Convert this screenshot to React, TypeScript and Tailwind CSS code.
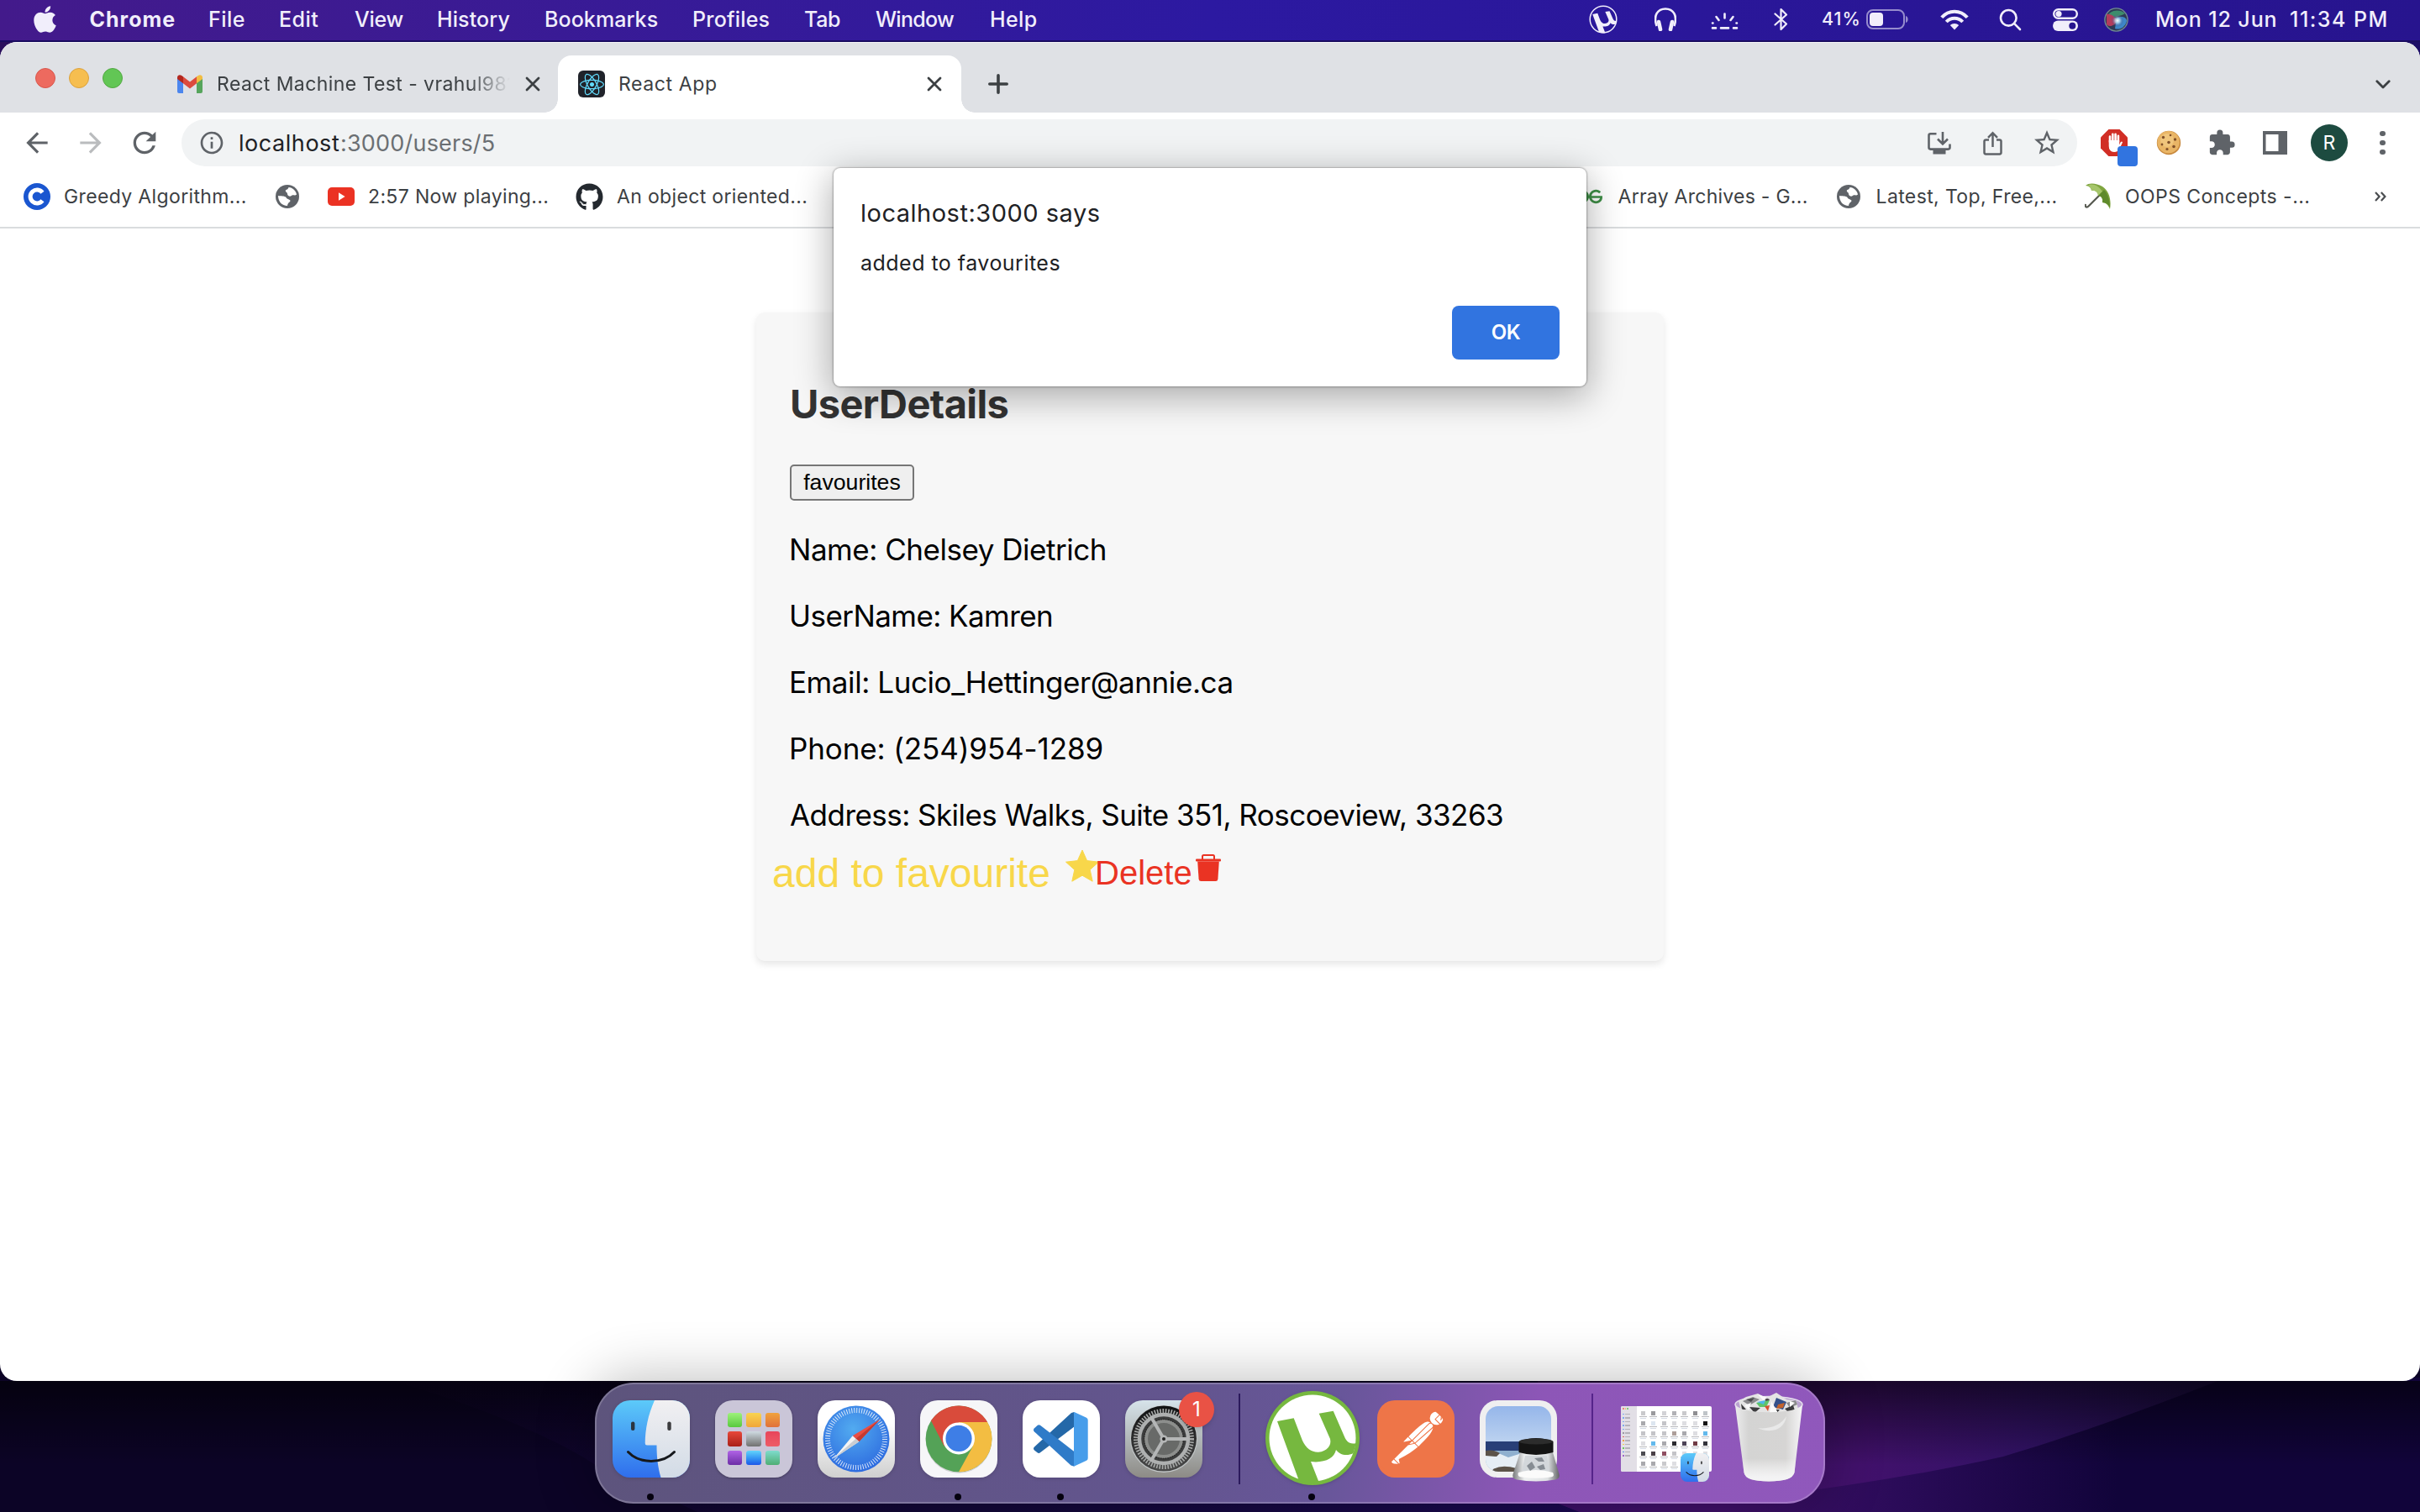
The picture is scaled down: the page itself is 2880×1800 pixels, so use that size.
import type { ReactNode } from "react";
import { FaApple, FaGithub, FaReact } from "react-icons/fa";
import { MdArrowBack, MdArrowForward, MdRefresh, MdInfoOutline, MdStarBorder, MdExtension } from "react-icons/md";
import { SiGeeksforgeeks, SiPostman } from "react-icons/si";

function Wallpaper() {
  return (
    <svg className="absolute inset-0" width="2880" height="1800" viewBox="0 0 2880 1800">
      <defs>
        <linearGradient id="wpTop" x1="0" x2="1" y1="0" y2="0">
          <stop offset="0" stopColor="#2a0f5c" />
          <stop offset="1" stopColor="#1b0c66" />
        </linearGradient>
        <linearGradient id="wpMid" x1="0" x2="1" y1="0" y2="0">
          <stop offset="0" stopColor="#0e0428" />
          <stop offset="0.6" stopColor="#14083c" />
          <stop offset="1" stopColor="#1b0a52" />
        </linearGradient>
        <linearGradient id="wpGlow" gradientUnits="userSpaceOnUse" x1="1850" y1="0" x2="2650" y2="0">
          <stop offset="0" stopColor="#3c1068" />
          <stop offset="0.45" stopColor="#42116c" />
          <stop offset="0.7" stopColor="#321266" />
          <stop offset="1" stopColor="#1d0d48" />
        </linearGradient>
        <linearGradient id="wpLow" gradientUnits="userSpaceOnUse" x1="2050" y1="0" x2="2520" y2="0">
          <stop offset="0" stopColor="#40106a" />
          <stop offset="0.45" stopColor="#2a0b58" />
          <stop offset="1" stopColor="#11043a" />
        </linearGradient>
        <linearGradient id="wpShade" x1="0" x2="0" y1="0" y2="1">
          <stop offset="0" stopColor="#000" stopOpacity="0.6" />
          <stop offset="1" stopColor="#000" stopOpacity="0" />
        </linearGradient>
      </defs>
      <rect width="2880" height="900" fill="url(#wpTop)" />
      <rect y="900" width="2880" height="900" fill="#0c0426" />
      <path d="M455 1640 C560 1670 660 1710 715 1748 C760 1770 800 1785 830 1800 H1900 V1640Z" fill="url(#wpMid)" />
      <path d="M1830 1640 V1780 L1880 1800 H2880 V1640Z" fill="url(#wpLow)" />
      <path d="M1830 1640 V1780 L1880 1800 C2060 1790 2230 1768 2384 1734 C2480 1705 2560 1675 2650 1640Z" fill="url(#wpGlow)" />
      <rect y="1644" width="2880" height="100" fill="url(#wpShade)" />
    </svg>
  );
}

const muPath =
  "M14 36 L33.7 32.3 L44 59 C48 68 55 73 63 72.7 C73 72 79 65 77 57 L63.7 26.7 L80.7 23.7 L93 52 C96 60 100 64 108 62 L104.5 74 C97 78 88 76 84 70 C82 80 70 86 54 84 L64 109.5 C56 111 47 110 40 107Z";

function MenuText({ children, className }: { children: string; className: string }) {
  return <span className={`shrink-0 whitespace-pre ${className}`}>{children}</span>;
}

function MenuBar() {
  return (
    <div className="relative flex h-[50px] items-center border-b-2 border-[#1a0c60] bg-linear-to-r from-[#431a8b] via-[#2c19a1] to-[#27148e] pb-[2px] pl-10 text-[25px] leading-none font-medium text-[#f1eefb]">
      <FaApple className="mr-[39.5px] h-9 w-[27px] shrink-0" />
      <MenuText className="w-[141.5px] font-bold tracking-[1px]">Chrome</MenuText>
      <MenuText className="w-[84px] tracking-[0.5px]">File</MenuText>
      <MenuText className="w-[90px] tracking-[0.5px]">Edit</MenuText>
      <MenuText className="w-[98px] tracking-[-0.3px]">View</MenuText>
      <MenuText className="w-[128px] tracking-[0.1px]">History</MenuText>
      <MenuText className="w-[176px] tracking-[0.08px]">Bookmarks</MenuText>
      <MenuText className="w-[133px] tracking-[0.2px]">Profiles</MenuText>
      <MenuText className="w-[85px] tracking-[-0.3px]">Tab</MenuText>
      <MenuText className="w-[136px] tracking-[-0.7px]">Window</MenuText>
      <MenuText className="w-[60px] tracking-[0.4px]">Help</MenuText>

      <svg className="ml-[653px] size-[34px] shrink-0" viewBox="0 0 112 112">
        <circle cx="56" cy="56" r="52" fill="none" stroke="currentColor" strokeWidth="5" />
        <path d={muPath} fill="currentColor" />
      </svg>
      <svg className="ml-11 h-[28px] w-[26px] shrink-0" viewBox="0 0 26 28" fill="none" stroke="currentColor">
        <path d="M2.6 22 C-2 9 4 1.5 13 1.5 C22 1.5 28 9 23.4 22" strokeWidth="2.6" />
        <path d="M5 17 L7 26 M21 17 L19 26" strokeWidth="4.6" strokeLinecap="round" />
      </svg>
      <svg className="mt-[3px] ml-[41px] h-[20px] w-[33px] shrink-0" viewBox="0 0 33 20" stroke="currentColor" strokeWidth="2.6" strokeLinecap="round">
        <path d="M16.5 1.5 V6.5 M6.5 5 L9.5 9 M26.5 5 L23.5 9 M2 12.5 H2.5 M30.5 12.5 H31 M2 18.4 H6 M12 18.4 H21 M27 18.4 H31" />
      </svg>
      <svg className="ml-[42px] h-[28px] w-[17px] shrink-0" viewBox="0 0 17 28" fill="none" stroke="currentColor" strokeWidth="2.2" strokeLinejoin="round" strokeLinecap="round">
        <path d="M1.5 7.5 L15 19.5 L8.5 26 V2 L15 8.5 L1.5 20.5" />
      </svg>
      <MenuText className="ml-[40px] w-[53px] text-[21.5px] tracking-[1px]">41%</MenuText>
      <svg className="h-[24px] w-[50px] shrink-0" viewBox="0 0 50 24">
        <rect x="1" y="1" width="44" height="22" rx="7" fill="none" stroke="currentColor" strokeOpacity="0.55" strokeWidth="2" />
        <rect x="4" y="4" width="16" height="16" rx="4" fill="currentColor" />
        <path d="M47 8 C50.5 9 50.5 15 47 16Z" fill="currentColor" fillOpacity="0.55" />
      </svg>
      <svg className="ml-[38px] h-[25px] w-[34px] shrink-0" viewBox="0 0 34 25" fill="none" stroke="currentColor" strokeWidth="4">
        <path d="M1.8 9.8 C10 0.3 24 0.3 32.2 9.8" />
        <path d="M7.3 15 C12.5 9.2 21.5 9.2 26.7 15" />
        <path d="M17 24.5 L11.8 19 C14.5 16.2 19.5 16.2 22.2 19Z" fill="currentColor" stroke="none" />
      </svg>
      <svg className="ml-9 size-[27px] shrink-0" viewBox="0 0 27 27" fill="none" stroke="currentColor" strokeWidth="2.6" strokeLinecap="round">
        <circle cx="11.3" cy="11.3" r="9.3" />
        <path d="M18.2 18.2 L25 25" />
      </svg>
      <svg className="ml-[37px] h-[27px] w-[30px] shrink-0" viewBox="0 0 30 27">
        <rect x="1.2" y="1.2" width="27.6" height="10.6" rx="5.3" fill="none" stroke="currentColor" strokeWidth="2.4" />
        <circle cx="7" cy="6.5" r="3.6" fill="currentColor" />
        <rect y="14.5" width="30" height="12.5" rx="6.2" fill="currentColor" />
        <circle cx="23.3" cy="20.7" r="4" fill="#27158f" />
      </svg>
      <svg className="ml-[31px] size-[29px] shrink-0" viewBox="0 0 29 29">
        <defs>
          <radialGradient id="siri">
            <stop offset="0" stopColor="#fff" />
            <stop offset="0.4" stopColor="#b5dcee" stopOpacity="0.75" />
            <stop offset="1" stopColor="#2d2c70" stopOpacity="0" />
          </radialGradient>
        </defs>
        <circle cx="14.5" cy="14.5" r="13.6" fill="#2e3a55" stroke="#6f8a92" strokeWidth="1.4" />
        <path d="M3 12 C6 3 18 1 25 7 C20 11 10 11 3 12Z" fill="#3d8c6c" />
        <path d="M3 8 C9 7 13 12 16 15 C13 22 6 24 3 20Z" fill="#b23c5c" />
        <path d="M15 13 C21 9 27 12 27 16 C25 24 18 27 13 25Z" fill="#3d86c8" />
        <circle cx="16" cy="15.5" r="7.5" fill="url(#siri)" />
      </svg>
      <MenuText className="ml-[32px] w-[160px] tracking-[0.9px]">Mon 12 Jun</MenuText>
      <MenuText className="tracking-[1.5px]">11:34 PM</MenuText>
    </div>
  );
}

function CloseX() {
  return (
    <svg className="size-[18px] shrink-0" viewBox="0 0 18 18" stroke="#3c4043" strokeWidth="2.8" strokeLinecap="round">
      <path d="M2 2 L16 16 M16 2 L2 16" />
    </svg>
  );
}

function TabStrip() {
  return (
    <div className="flex h-[84px] items-center border-t border-white/70 bg-[#dfe1e5] pt-[15px] pl-[42px] text-[23px] leading-none text-[#3c4043]">
      <div className="-mt-[14px] flex gap-4">
        <span className="size-6 rounded-full border border-[#d8564c] bg-[#ed6a5f]" />
        <span className="size-6 rounded-full border border-[#dba13d] bg-[#f6be50]" />
        <span className="size-6 rounded-full border border-[#52a842] bg-[#62c655]" />
      </div>
      <svg className="ml-[65px] h-[22px] w-[30px] shrink-0" viewBox="0 0 30 22">
        <path d="M0 3 V20 Q0 22 2 22 H7 V9Z" fill="#4c86ee" />
        <path d="M30 3 V20 Q30 22 28 22 H23 V9Z" fill="#56a55c" />
        <path d="M7 2.2 L15 8.5 L23 2.2 V10.2 L15 16.4 L7 10.2Z" fill="#dc4b3e" />
        <path d="M23 2.2 L25.2 0.7 C27.3 -0.7 30 0.8 30 3.2 V5 L23 10.2Z" fill="#f2bd42" />
        <path d="M7 2.2 L4.8 0.7 C2.7 -0.7 0 0.8 0 3.2 V5 L7 10.2Z" fill="#b3271e" />
      </svg>
      <span className="mr-[18px] ml-[17px] w-[349px] shrink-0 overflow-hidden py-2 tracking-[0.42px] whitespace-nowrap [mask-image:linear-gradient(to_right,#000_86%,transparent)]">
        React Machine Test - vrahul981
      </span>
      <CloseX />
      <div className="ml-[5px] size-4 shrink-0 self-end bg-[radial-gradient(circle_at_0_0,transparent_15.5px,#fff_16px)]" />
      <div className="flex h-[68px] w-[480px] shrink-0 items-center rounded-t-2xl bg-white pr-[23px] pl-6">
        <span className="flex size-8 items-center justify-center rounded-md bg-[#20232a]">
          <FaReact className="size-[29px] text-[#61dafb]" />
        </span>
        <span className="mr-auto ml-[16px] tracking-[0.6px]">React App</span>
        <CloseX />
      </div>
      <div className="size-4 shrink-0 self-end bg-[radial-gradient(circle_at_100%_0,transparent_15.5px,#fff_16px)]" />
      <svg className="ml-4 size-6 shrink-0" viewBox="0 0 24 24" stroke="#3c4043" strokeWidth="3.6" strokeLinecap="round">
        <path d="M12 1.8 V22.2 M1.8 12 H22.2" />
      </svg>
      <svg className="mr-[35px] ml-auto h-[11px] w-[18px]" viewBox="0 0 18 11" fill="none" stroke="#3c4043" strokeWidth="2.8" strokeLinecap="round" strokeLinejoin="round">
        <path d="M1.8 1.8 L9 9 L16.2 1.8" />
      </svg>
    </div>
  );
}

function Cookie() {
  return (
    <svg className="ml-[22px] size-[30px] shrink-0" viewBox="0 0 30 30">
      <circle cx="15" cy="15" r="14.2" fill="#c98a3f" />
      <circle cx="14.6" cy="14.2" r="13.2" fill="#e9b566" />
      <circle cx="13" cy="12" r="8" fill="#f0c57c" />
      <g fill="#80502a">
        <circle cx="8.5" cy="8.5" r="1.7" /><circle cx="17" cy="6" r="1.3" /><circle cx="22.5" cy="11" r="1.7" />
        <circle cx="15" cy="14.5" r="1.8" /><circle cx="7" cy="17" r="1.4" /><circle cx="21" cy="19.5" r="1.8" /><circle cx="13" cy="22.5" r="1.6" />
      </g>
    </svg>
  );
}

function Toolbar() {
  return (
    <div className="flex h-16 items-center pt-2 pl-[25px] text-[#5f6368]">
      <MdArrowBack className="size-[38px] shrink-0" />
      <MdArrowForward className="ml-[26px] size-[38px] shrink-0 text-[#babcbe]" />
      <MdRefresh className="ml-[25px] size-10 shrink-0" />
      <div className="ml-6 flex h-14 w-[2256px] shrink-0 items-center rounded-full bg-[#f1f3f4] pr-[18px] pl-5 text-[27px] leading-none">
        <MdInfoOutline className="mr-[16px] size-8" />
        <span className="w-[121px] tracking-[0.55px] text-[#202124]">localhost</span>
        <span className="mr-auto tracking-[0.2px] text-[#6b6f73]">:3000/users/5</span>
        <svg className="h-[27px] w-[28px]" viewBox="0 0 28 27" fill="none" stroke="currentColor" strokeWidth="2.6">
          <path d="M10.5 2.3 H3.5 Q1.5 2.3 1.5 4.3 V18.6 Q1.5 20.6 3.5 20.6 H24.5 Q26.5 20.6 26.5 18.6 V14.5" />
          <path d="M18 0 V13.5 M12 8.5 L18 14.5 L24 8.5" />
          <path d="M6.5 21 H21.5 V26.5 H6.5Z" fill="currentColor" stroke="none" />
        </svg>
        <svg className="ml-[38px] h-[29px] w-[23px]" viewBox="0 0 23 29" fill="none" stroke="currentColor" strokeWidth="2.5">
          <path d="M7 10.5 H3.3 Q1.5 10.5 1.5 12.3 V25.5 Q1.5 27.4 3.3 27.4 H19.7 Q21.5 27.4 21.5 25.5 V12.3 Q21.5 10.5 19.7 10.5 H16" />
          <path d="M11.5 19 V2.5 M6 7.8 L11.5 2.2 L17 7.8" />
        </svg>
        <MdStarBorder className="ml-[35px] size-9" />
      </div>
      <div className="relative ml-7 h-11 w-11 shrink-0">
        <svg className="absolute top-[6px] left-0 size-8" viewBox="0 0 32 32">
          <path d="M9.4 0 H22.6 L32 9.4 V22.6 L22.6 32 H9.4 L0 22.6 V9.4Z" fill="#d12e25" />
          <path d="M11 15 V8.5 M14.3 14 V5.8 M17.6 14 V5.8 M20.9 15 V7.8" stroke="#fff" strokeWidth="2.6" strokeLinecap="round" />
          <path d="M9.7 13 H22.2 V18.5 L23.5 15.5 Q25.2 13.4 26 15.4 L22.5 23 Q20.5 27 16 27 Q9.7 26.5 9.7 20Z" fill="#fff" />
        </svg>
        <span className="absolute top-[26px] left-5 size-6 rounded-[4px] bg-[#3174e0]" />
      </div>
      <Cookie />
      <MdExtension className="ml-[31px] size-[34px] shrink-0" />
      <svg className="ml-8 h-[28px] w-[29px] shrink-0" viewBox="0 0 29 28">
        <path d="M0 0 H29 V28 H0Z M3.5 4 V24 H18.5 V4Z" fill="currentColor" fillRule="evenodd" />
      </svg>
      <span className="ml-7 flex size-11 shrink-0 items-center justify-center rounded-full bg-[#1d4b40] text-[23px] leading-none text-white">R</span>
      <div className="ml-[38px] flex flex-col gap-[4.5px]">
        <span className="size-[6.5px] rounded-full bg-[#5f6368]" />
        <span className="size-[6.5px] rounded-full bg-[#5f6368]" />
        <span className="size-[6.5px] rounded-full bg-[#5f6368]" />
      </div>
    </div>
  );
}

function Globe({ className }: { className: string }) {
  return (
    <svg className={`size-[28px] shrink-0 ${className}`} viewBox="0 0 28 28">
      <circle cx="14" cy="14" r="14" fill="#5f6368" />
      <path d="M15.5 3 C20.5 3.3 24 7 25 11.5 C23 13.5 21.5 11.5 19.5 12.5 C18 14.5 14.5 13.8 14 11 C14.5 9 11 8.8 12 6.2 C13.5 5.8 15 5 15.5 3Z" fill="#fff" />
      <path d="M3 13 C6 13.5 10.5 13 12.5 15 C13.5 17.5 17 17 17.5 19 C17 21 14.5 21 14 25 C7.5 25 3 20 3 13Z" fill="#fff" />
    </svg>
  );
}

function BookmarksBar() {
  return (
    <div className="flex h-[74px] items-center border-b-2 border-[#dadcde] pl-7 text-[23px] leading-none whitespace-nowrap text-[#3c4043]">
      <svg className="mr-[16px] size-8 shrink-0" viewBox="0 0 32 32">
        <circle cx="16" cy="16" r="16" fill="#1a56d0" />
        <path d="M22.5 11.2 A8 8 0 1 0 22.5 20.8" fill="none" stroke="#fff" strokeWidth="5" />
      </svg>
      <span className="w-[252px] shrink-0 tracking-[0.36px]">Greedy Algorithm...</span>
      <Globe className="mr-[34px]" />
      <svg className="mr-4 h-[22px] w-8 shrink-0" viewBox="0 0 32 22">
        <rect width="32" height="22" rx="5" fill="#eb3223" />
        <path d="M13 6.3 L20.6 11 L13 15.7Z" fill="#fff" />
      </svg>
      <span className="w-[247px] shrink-0 tracking-[0.36px]">2:57 Now playing...</span>
      <FaGithub className="mr-[16px] size-[33px] shrink-0 text-[#24292f]" />
      <span className="w-[1141px] shrink-0 tracking-[0.34px]">An object oriented...</span>
      <SiGeeksforgeeks className="mr-[18.5px] size-8 shrink-0 text-[#3f8f47]" />
      <span className="w-[260.5px] shrink-0 tracking-[0.26px]">Array Archives - G...</span>
      <Globe className="mr-[18.5px]" />
      <span className="w-[248.5px] shrink-0 tracking-[0.38px]">Latest, Top, Free,...</span>
      <svg className="mr-4 size-8 shrink-0" viewBox="0 0 32 32">
        <path d="M24 8 L5 27 C2 30 0 28 1 25" fill="none" stroke="#55584f" strokeWidth="2.2" />
        <path d="M1 3 C5 -1 14 0 21 4 C29 9 32 20 30 31 C28 26 25 23 21 23 C22 19 20 15 16 15 C16 11 12 8 8 9 C8 6 5 3 1 3Z" fill="#7fa53f" />
        <path d="M4 2 C10 0 17 3 21 10 L16 15 C16 11 12 8 8 9 C8 6 6 4 4 2Z" fill="#a5c56a" />
        <path d="M23 8 C28 13 30 21 30 29 C28 25 25 23 21 23 C22 19 20 15 16 15Z" fill="#5f8a2c" />
      </svg>
      <span className="w-[297px] shrink-0 tracking-[0.45px]">OOPS Concepts -...</span>
      <svg className="h-[12px] w-[14px] shrink-0" viewBox="0 0 14 12" fill="none" stroke="#4a4d50" strokeWidth="2.2">
        <path d="M1 1 L5.6 6 L1 11 M7.8 1 L12.4 6 L7.8 11" />
      </svg>
    </div>
  );
}

function UserCard() {
  return (
    <div className="mx-auto mt-[100px] h-[772px] w-[1080px] rounded-[10px] bg-[#f7f7f7] pt-[81px] pl-10 shadow-[0_4px_8px_rgba(0,0,0,0.1)]">
      <h2 className="h-14 text-[47px] leading-[56px] font-bold tracking-[-0.62px] text-[#333]">UserDetails</h2>
      <button className="mt-11 flex h-[43px] w-[148px] items-center justify-center rounded-[5px] border-2 border-[#767676] bg-[#efefef] font-['Liberation_Sans',sans-serif] text-[26.67px] leading-none text-black">
        favourites
      </button>
      <div className="mt-[19px] text-[35px] leading-[79px] whitespace-nowrap text-black">
        <p className="-ml-px tracking-[-0.47px]">Name: Chelsey Dietrich</p>
        <p className="-ml-px tracking-[-0.56px]">UserName: Kamren</p>
        <p className="-ml-px tracking-[-0.42px]">Email: Lucio_Hettinger@annie.ca</p>
        <p className="-ml-px tracking-[-0.12px]">Phone: (254)954-1289</p>
        <p className="tracking-[-0.54px]">Address: Skiles Walks, Suite 351, Roscoeview, 33263</p>
      </div>
      <div className="-ml-[21px] flex h-[59px] items-start font-['Liberation_Sans',sans-serif] leading-[59px] whitespace-nowrap">
        <span className="w-[349px] text-[48px] text-[#f8d74a]">add to favourite</span>
        <svg className="mt-[2px] h-[38px] w-10" viewBox="0 0 40 38" fill="#f8d74a">
          <path d="M20 0 L25.6 12.6 L39.5 14.2 L29.2 23.4 L32.2 37.2 L20 30.2 L7.8 37.2 L10.8 23.4 L0.5 14.2 L14.4 12.6Z" stroke="#f8d74a" strokeLinejoin="round" />
        </svg>
        <span className="-ml-[5px] w-[120px] text-[40px] text-[#ea3323]">Delete</span>
        <svg className="mt-[7px] h-[32px] w-[30px]" viewBox="0 0 30 32" fill="#ea3323">
          <path d="M8 6.5 V2.5 Q8 1 9.5 1 H20.5 Q22 1 22 2.5 V6.5" fill="none" stroke="#ea3323" strokeWidth="2" />
          <rect y="5.5" width="30" height="3" rx="1" />
          <path d="M2.2 8.5 H27.8 L26.4 29.5 Q26.2 32 23.7 32 H6.3 Q3.8 32 3.6 29.5Z" />
        </svg>
      </div>
    </div>
  );
}

function AlertDialog() {
  return (
    <div className="absolute top-[200px] left-[992px] flex h-[260px] w-[896px] flex-col rounded-lg bg-white pt-9 pr-8 pl-8 leading-none text-[#202124] shadow-[0_0_2px_1px_rgba(0,0,0,0.28),0_10px_44px_2px_rgba(0,0,0,0.32)]">
      <p className="text-[29px] leading-[36px] tracking-[0.5px]">localhost:3000 says</p>
      <p className="mt-[26px] text-[25px] leading-[30px] tracking-[0.48px]">added to favourites</p>
      <button className="mt-[36px] h-16 w-32 self-end rounded-lg bg-[#3174e0] text-[24px] font-semibold tracking-[-0.3px] text-white">OK</button>
    </div>
  );
}

function FinderFace({ className }: { className: string }) {
  return (
    <svg className={className} viewBox="0 0 92 92">
      <defs>
        <linearGradient id="finderBlue" x1="0" x2="0" y1="0" y2="1">
          <stop offset="0" stopColor="#5ccaf9" />
          <stop offset="1" stopColor="#2f6eed" />
        </linearGradient>
        <linearGradient id="finderWhite" x1="0" x2="0" y1="0" y2="1">
          <stop offset="0" stopColor="#f1f0f2" />
          <stop offset="1" stopColor="#d2dbe6" />
        </linearGradient>
        <clipPath id="finderClip"><rect width="92" height="92" rx="21" /></clipPath>
      </defs>
      <g clipPath="url(#finderClip)">
        <rect width="92" height="92" fill="url(#finderBlue)" />
        <path d="M50 0 C42 18 39 34 38.7 51 Q38.7 53.5 41 53.5 H52.5 C52.5 68 54 80 57.5 92 H92 V0Z" fill="url(#finderWhite)" />
        <rect x="22" y="25.5" width="4.4" height="10.5" rx="2.1" fill="#2b3440" />
        <rect x="65.3" y="25.5" width="4.4" height="10.5" rx="2.1" fill="#3c3c3e" />
        <path d="M18.5 61.5 C32 76 60 76 73.5 61.5" fill="none" stroke="#16181c" strokeWidth="3" strokeLinecap="round" />
      </g>
    </svg>
  );
}

function Launchpad() {
  return (
    <div className="grid size-[92px] grid-cols-3 gap-x-[5.3px] gap-y-[5.3px] rounded-[21px] bg-[#cac6d8] p-[15px] shadow-[0_1px_3px_rgba(0,0,0,0.3)]">
      <span className="rounded-[3px] bg-linear-to-b from-[#9df27a] to-[#58c93d]" />
      <span className="rounded-[3px] bg-linear-to-b from-[#f8d34f] to-[#f0a63a]" />
      <span className="rounded-[3px] bg-linear-to-b from-[#f0a23c] to-[#e0713a]" />
      <span className="rounded-[3px] bg-linear-to-b from-[#e8473a] to-[#a91f18]" />
      <span className="rounded-[3px] bg-linear-to-b from-[#cfdbe2] to-[#717170]" />
      <span className="rounded-[3px] bg-linear-to-b from-[#e8445a] to-[#ee5c68]" />
      <span className="rounded-[3px] bg-linear-to-b from-[#b163e6] to-[#6d2da6]" />
      <span className="rounded-[3px] bg-linear-to-b from-[#63d4fb] to-[#2056e8]" />
      <span className="rounded-[3px] bg-linear-to-b from-[#7fdccd] to-[#4fae74]" />
    </div>
  );
}

function SafariIcon() {
  return (
    <svg className="size-[92px] drop-shadow-sm" viewBox="0 0 92 92">
      <defs>
        <linearGradient id="sfBg" x1="0" x2="0" y1="0" y2="1"><stop offset="0.3" stopColor="#fff" /><stop offset="1" stopColor="#cfcfcf" /></linearGradient>
        <radialGradient id="sfBlue" cx="0.45" cy="0.35" r="0.7"><stop offset="0" stopColor="#52abf0" /><stop offset="1" stopColor="#2b67de" /></radialGradient>
      </defs>
      <rect width="92" height="92" rx="21" fill="url(#sfBg)" />
      <circle cx="46" cy="46" r="39.5" fill="url(#sfBlue)" />
      <circle cx="46" cy="46" r="34" fill="none" stroke="#fff" strokeOpacity="0.8" strokeWidth="6" strokeDasharray="1 1.967" />
      <path d="M74.5 22.5 L41.7 42.3 L49.3 49.3Z" fill="#ea4e43" />
      <path d="M74.5 22.5 L45.5 45.8 L49.3 49.3Z" fill="#c43a31" />
      <path d="M19 69.5 L41.7 42.3 L49.3 49.3Z" fill="#f4f4f4" />
      <path d="M19 69.5 L45.5 45.8 L49.3 49.3Z" fill="#c9cdd2" />
    </svg>
  );
}

function ChromeIcon() {
  return (
    <svg className="size-[92px] drop-shadow-sm" viewBox="0 0 92 92">
      <rect width="92" height="92" rx="21" fill="#f6f6f8" />
      <circle cx="46" cy="47.5" r="39.3" fill="#000" fillOpacity="0.15" />
      <circle cx="46" cy="45.8" r="39.4" fill="#54a257" />
      <path d="M80.1 26 A39.4 39.4 0 0 1 46 85.2 L62.5 55.3 L46 45.8 V26Z" fill="#f3bd42" />
      <path d="M13 24.3 A39.4 39.4 0 0 1 80.1 26 H46 V45.8 L28.5 54.5Z" fill="#d94b3b" />
      <circle cx="46" cy="45.4" r="19" fill="#fff" />
      <circle cx="46" cy="45.4" r="15.6" fill="#3e7ee6" />
    </svg>
  );
}

function CodeIcon() {
  return (
    <svg className="size-[92px] drop-shadow-sm" viewBox="0 0 92 92">
      <rect width="92" height="92" rx="21" fill="#fff" />
      <path d="M61.3 14 L58 15 L14 55.5 Q12 57.5 14 59.5 L17.5 62.3 Q19.3 63.6 21.3 62 L61.3 31.5Z" fill="#2468a8" />
      <path d="M13.8 37.2 Q12 35.2 14 33.3 L17.5 30 Q19.3 28.6 21.3 30 L61.3 61 V78.7 L57.5 77.4Z" fill="#2f7bc8" />
      <path d="M61 14 Q60.5 14 62 14.3 L76 20.8 Q77.7 21.8 77.7 23.5 V69 Q77.7 71 76 71.8 L61 78.7Z" fill="#479dea" />
    </svg>
  );
}

function SettingsIcon() {
  return (
    <svg className="size-[92px] drop-shadow-sm" viewBox="0 0 92 92">
      <defs>
        <linearGradient id="stBg" x1="0" x2="0" y1="0" y2="1"><stop offset="0" stopColor="#d6e3ea" /><stop offset="1" stopColor="#8d8b86" /></linearGradient>
        <linearGradient id="stRim" x1="0" x2="0" y1="0" y2="1"><stop offset="0" stopColor="#101112" /><stop offset="1" stopColor="#4a4a4a" /></linearGradient>
      </defs>
      <rect width="92" height="92" rx="21" fill="url(#stBg)" />
      <circle cx="46" cy="46" r="40" fill="#c3c7c8" />
      <circle cx="46" cy="45.6" r="39" fill="url(#stRim)" />
      <circle cx="46" cy="46" r="33.5" fill="none" stroke="#a5a7a6" strokeWidth="5" strokeDasharray="1.7 1.62" />
      <circle cx="46" cy="46" r="29" fill="#3c3d3d" stroke="#aeb0b0" strokeWidth="4.5" />
      <circle cx="46" cy="46" r="21" fill="#686a68" stroke="#8c8e8c" strokeWidth="4" />
      <circle cx="46" cy="46" r="23.5" fill="none" stroke="#2a2a2a" strokeWidth="1.4" strokeDasharray="1.4 1.4" />
      <g stroke="#b4b6b6" strokeWidth="4" strokeLinecap="round">
        <path d="M46 46 H75 M46 46 L31.5 20.9 M46 46 L31.5 71.1" />
      </g>
      <circle cx="46" cy="46" r="4.6" fill="#b4b6b6" />
      <circle cx="46" cy="46" r="2" fill="#222" />
    </svg>
  );
}

function TorrentIcon() {
  return (
    <svg className="size-[112px] shrink-0 drop-shadow" viewBox="0 0 112 112">
      <circle cx="56" cy="56" r="56" fill="#76b83f" />
      <circle cx="56" cy="56" r="51.5" fill="#fff" />
      <path d={muPath} fill="#76b83f" />
    </svg>
  );
}

function PostmanIcon() {
  return (
    <div className="relative flex size-[92px] items-center justify-center overflow-hidden rounded-[21px] bg-[#ee7548]">
      <span className="absolute size-20 rounded-full bg-white" />
      <SiPostman className="relative size-[104px] shrink-0 text-[#ee7548]" />
    </div>
  );
}

function PreviewIcon() {
  return (
    <svg className="h-[100px] w-[96px] overflow-visible" viewBox="0 0 96 100">
      <defs>
        <linearGradient id="pvSky" x1="0" x2="0" y1="0" y2="1"><stop offset="0" stopColor="#95b6ea" /><stop offset="1" stopColor="#bdd3f0" /></linearGradient>
        <linearGradient id="pvGlass" x1="0" x2="1" y1="0" y2="0"><stop offset="0" stopColor="#77797b" /><stop offset="0.25" stopColor="#eef0f1" /><stop offset="0.75" stopColor="#dfe2e4" /><stop offset="1" stopColor="#606264" /></linearGradient>
        <clipPath id="pvClip"><rect x="7" y="7" width="78" height="78" rx="15" /></clipPath>
      </defs>
      <rect width="92" height="92" rx="21" fill="#efeff0" />
      <g clipPath="url(#pvClip)">
        <rect x="7" y="7" width="78" height="44" fill="url(#pvSky)" />
        <rect x="7" y="49" width="78" height="12" fill="#283f77" />
        <rect x="7" y="60" width="78" height="26" fill="#8fb0cf" />
        <path d="M7 66 L20 62 L34 68 L50 63 V85 H7Z" fill="#e6eef5" />
        <path d="M7 60 Q16 58 24 63 L20 67 L7 66Z M16 82 Q26 76 44 81 V86 H14Z" fill="#5c5349" />
      </g>
      <path d="M48 62 H87 L94.5 88 Q96 93 90 94.5 Q67 98.5 44 94.5 Q38 93 39.5 88Z" fill="url(#pvGlass)" />
      <path d="M54 66 H80 L83 84 Q67 88 50 84Z" fill="#d3d7db" />
      <path d="M46 86 Q67 80 87 86 Q90 91 84 91.5 Q67 94 50 91.5 Q44 91 46 86Z" fill="#fbfbfb" />
      <path d="M56 78 L62 73 L66 80 L60 84Z M65 69 L74 68 L77 73 L70 73Z M68 79 L76 76 L78 82 L72 83Z" fill="#868c93" />
      <path d="M46.5 49 Q67 41 87.5 49 V62 Q67 68 46.5 62Z" fill="#141414" />
      <ellipse cx="67" cy="49" rx="20" ry="3.6" fill="#2c2c2c" />
    </svg>
  );
}

const fileColors = [
  "bg-[#c9c9cc]", "bg-[#9a9a9e]", "bg-[#d2d2d6]", "bg-[#b1b1b6]", "bg-[#c9c9cc]", "bg-[#8e8e92]", "bg-[#bfc4c8]",
  "bg-[#a9a9ad]", "bg-[#dde6f0]", "bg-[#c4c4c8]", "bg-[#d8d8dc]", "bg-[#dedee2]", "bg-[#dedee2]", "bg-[#151515]",
  "bg-[#c4c4c8]", "bg-[#c4c4c8]", "bg-[#c4c4c8]", "bg-[#ad9e9a]", "bg-[#a9a9ad]", "bg-[#dedee2]", "bg-[#63b9ec]",
  "bg-[#dedee2]", "bg-[#63b9ec]", "bg-[#a9a9ad]", "bg-[#2b2b30]", "bg-[#4d4457]", "bg-[#703b45]", "bg-[#33343c]",
  "bg-[#4c4c52]", "bg-[#4a4048]", "bg-[#8f4f62]", "bg-[#c4c4c8]", "bg-[#dedee2]", "bg-[#dedee2]", "bg-[#dedee2]",
  "bg-[#a9a9ad]", "bg-[#a9a9ad]", "bg-[#c9c9cc]", "bg-[#dedee2]", "bg-[#dedee2]", "bg-[#dedee2]", "bg-[#dedee2]",
];

const sidebarDots = [
  "bg-[#7fa9ef]", "bg-[#7fa9ef]", "bg-[#7fa9ef]", "bg-[#7fa9ef]", "bg-[#7fa9ef]", "bg-[#9a9aa2]",
  "bg-[#e46a5e]", "bg-[#eda04c]", "bg-[#efcf56]", "bg-[#6cc663]", "bg-[#5a8fe8]", "bg-[#a067c8]",
];

function MinimisedFinder() {
  return (
    <div className="relative flex h-[78px] w-[108px] overflow-visible rounded-[2px] bg-white">
      <div className="flex w-[19px] flex-col gap-[3px] rounded-l-[2px] bg-[#e2dfe6] pt-[2px] pl-[2px]">
        <div className="mb-[2px] flex gap-[1px]">
          <span className="size-[1.5px] rounded-full bg-[#ed6a5f]" />
          <span className="size-[1.5px] rounded-full bg-[#f6be50]" />
          <span className="size-[1.5px] rounded-full bg-[#62c655]" />
        </div>
        {sidebarDots.map((c, i) => (
          <div key={i} className="flex h-[1.5px] gap-[1px]">
            <span className={`w-[2px] ${c}`} />
            <span className="w-[6px] bg-[#b5b2ba]" />
          </div>
        ))}
      </div>
      <div className="grid flex-1 grid-cols-7 content-start gap-x-[3px] gap-y-[2.6px] px-[3px] pt-[6px]">
        {fileColors.map((c, i) => (
          <div key={i} className="flex h-[9.4px] flex-col items-center gap-[1px]">
            <span className={`h-[5px] w-[5px] ${c}`} />
            <span className="h-[1px] w-[9px] bg-[#b8b8bc]" />
            <span className="h-[1px] w-[7px] bg-[#d5dbe6]" />
          </div>
        ))}
      </div>
      <FinderFace className="absolute top-[56px] left-[71px] size-[34px]" />
    </div>
  );
}

function TrashIcon() {
  return (
    <svg className="h-[106px] w-[82px]" viewBox="0 0 82 106">
      <defs>
        <linearGradient id="trBody" x1="0" x2="1" y1="0" y2="0"><stop offset="0" stopColor="#ececed" /><stop offset="0.2" stopColor="#d4d4d3" /><stop offset="0.75" stopColor="#d6d5d4" /><stop offset="1" stopColor="#f6f6f7" /></linearGradient>
        <linearGradient id="trFoot" x1="0" x2="0" y1="0" y2="1"><stop offset="0.7" stopColor="#fff" stopOpacity="0" /><stop offset="0.95" stopColor="#f3f3f4" /></linearGradient>
      </defs>
      <ellipse cx="41" cy="14" rx="40" ry="9.5" fill="#b9a2cf" stroke="#e6e0ee" strokeWidth="1.6" />
      <path d="M5 10 L14 5 L28 1 L38 6 L50 0 L62 8 L74 10 L76 20 Q41 30 8 21Z" fill="#e4e4e4" />
      <path d="M10 10 L22 5 L30 8 L18 15Z M62 12 L73 9 L75 14 L66 18Z" fill="#8a8a8c" />
      <path d="M14 8 L24 6 L20 11Z M36 5 L42 8 L38 14Z" fill="#4b4b4e" />
      <path d="M26 12 L42 9 L38 17 L30 17Z" fill="#5ec46a" />
      <path d="M27 11 L37 9 L35 14Z" fill="#4eb5ea" />
      <path d="M36 16 L42 15 L40 22Z" fill="#d7502f" />
      <path d="M50 6 L62 11 L58 20 L46 17Z" fill="#34508a" />
      <path d="M52 14 L60 12 L58 18 L50 19Z" fill="#c3632c" />
      <path d="M18 17 L31 18 L24 24Z M8 13 L14 20 L9 20Z M60 19 L70 15 L72 21 L64 23Z M46 20 L54 20 L50 25Z" fill="#3c3c3e" />
      <path d="M44 10 L52 24 L42 24Z M28 2 L40 6 L34 9Z M66 10 L72 12 L66 17Z M12 15 L20 12 L17 21Z" fill="#fafafa" />
      <path d="M1 15 C10 26 72 26 81 15 L71.5 95 Q69 105.5 41 105.5 Q13 105.5 11.5 95Z" fill="url(#trBody)" />
      <path d="M1 15 C10 26 72 26 81 15 L71.5 95 Q69 105.5 41 105.5 Q13 105.5 11.5 95Z" fill="url(#trFoot)" />
      <path d="M28 42 C42 44 56 38 62 28 C60 42 46 50 28 42Z" fill="#e9e9e9" />
    </svg>
  );
}

function DockItem({ children, running, className }: { children: ReactNode; running?: boolean; className?: string }) {
  return (
    <div className={`relative flex size-[92px] shrink-0 items-center justify-center ${className ?? ""}`}>
      {children}
      {running && <span className="absolute top-[111px] left-[41px] size-2 rounded-full bg-[#05010f]" />}
    </div>
  );
}

function Dock() {
  return (
    <div className="relative mx-auto mt-[2px] flex h-36 w-[1464px] items-center rounded-[46px] border-2 border-white/20 bg-[linear-gradient(100deg,#5d547c_0%,#63558f_48%,#68569a_60%,#8d56b7_76%,#9058bc_100%)] bg-origin-border pb-[10px] pl-[19px] shadow-[0_0_64px_8px_rgba(0,0,0,0.24)]">
      <DockItem running><FinderFace className="size-[92px] drop-shadow-sm" /></DockItem>
      <DockItem className="ml-[30px]"><Launchpad /></DockItem>
      <DockItem className="ml-[30px]"><SafariIcon /></DockItem>
      <DockItem className="ml-[30px]" running><ChromeIcon /></DockItem>
      <DockItem className="ml-[30px]" running><CodeIcon /></DockItem>
      <DockItem className="ml-[30px]">
        <SettingsIcon />
        <span className="absolute -top-[10px] left-[64px] flex size-[42px] items-center justify-center rounded-full bg-[#e95245] text-[24px] leading-none text-white shadow-md">1</span>
      </DockItem>
      <div className="ml-[43px] h-[108px] w-[2px] bg-[#2b1a5c]" />
      <DockItem className="mr-[11px] ml-10" running>
        <div className="-mt-[2px] shrink-0"><TorrentIcon /></div>
      </DockItem>
      <DockItem className="ml-5"><PostmanIcon /></DockItem>
      <DockItem className="ml-[30px]">
        <div className="absolute top-0 left-0"><PreviewIcon /></div>
      </DockItem>
      <div className="ml-[41px] h-[108px] w-[2px] bg-[#55248a]" />
      <div className="ml-[33px]"><MinimisedFinder /></div>
      <div className="ml-[27px] -mt-[4px]"><TrashIcon /></div>
    </div>
  );
}

export default function App() {
  return (
    <div className="relative h-[1800px] w-[2880px] overflow-hidden bg-[#0c0426] font-['Inter',sans-serif]">
      <Wallpaper />
      <div className="relative flex h-full flex-col">
        <MenuBar />
        <div className="h-[1594px] shrink-0 overflow-hidden rounded-[20px] bg-white">
          <TabStrip />
          <Toolbar />
          <BookmarksBar />
          <UserCard />
        </div>
        <Dock />
        <AlertDialog />
      </div>
    </div>
  );
}
